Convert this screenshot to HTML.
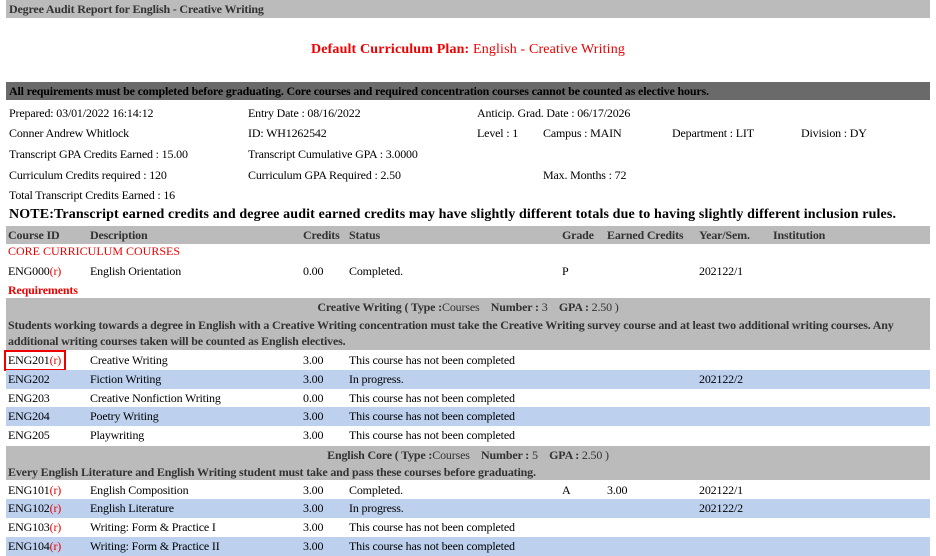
<!DOCTYPE html>
<html><head><meta charset="utf-8"><style>
body{margin:0;width:936px;height:548px;overflow:hidden;background:#fff;font-family:"Liberation Serif",serif;font-size:12px;letter-spacing:-0.17px;color:#000;position:relative}
div{position:absolute;white-space:nowrap}
.b{font-weight:bold}
.r{color:#e00}
.row{left:6px;width:924px;height:19px}
.row span{position:absolute;top:2px}
.blue{background:#bdd1ee}
.gray{background:#bbb}
.c1{left:2px}.c2{left:84px}.c3{left:297px}.c4{left:343px}.c5{left:556px}.c6{left:601px}.c7{left:693px}.c8{left:767px}
</style></head><body>
<div class="gray b" style="left:6px;top:0;width:924px;height:18px;color:#333"><span style="position:absolute;left:3px;top:2px">Degree Audit Report for English - Creative Writing</span></div>
<div style="left:0;width:936px;top:42px;text-align:center;font-size:14px;letter-spacing:0.15px;color:#e00"><b>Default Curriculum Plan:</b> English - Creative Writing</div>
<div class="b" style="left:6px;top:82px;width:924px;height:18px;background:#6a6a6a;color:#000"><span style="position:absolute;left:3px;top:2px">All requirements must be completed before graduating. Core courses and required concentration courses cannot be counted as elective hours.</span></div>
<div style="left:9px;top:106px">Prepared: 03/01/2022 16:14:12</div>
<div style="left:248px;top:106px">Entry Date : 08/16/2022</div>
<div style="left:477px;top:106px">Anticip. Grad. Date : 06/17/2026</div>
<div style="left:9px;top:126px">Conner Andrew Whitlock</div>
<div style="left:248px;top:126px">ID: WH1262542</div>
<div style="left:477px;top:126px">Level : 1</div>
<div style="left:543px;top:126px">Campus : MAIN</div>
<div style="left:672px;top:126px">Department : LIT</div>
<div style="left:801px;top:126px">Division : DY</div>
<div style="left:9px;top:147px">Transcript GPA Credits Earned : 15.00</div>
<div style="left:248px;top:147px">Transcript Cumulative GPA : 3.0000</div>
<div style="left:9px;top:168px">Curriculum Credits required : 120</div>
<div style="left:248px;top:168px">Curriculum GPA Required : 2.50</div>
<div style="left:543px;top:168px">Max. Months : 72</div>
<div style="left:9px;top:188px">Total Transcript Credits Earned : 16</div>
<div class="b" style="left:9px;top:207px;font-size:14px;letter-spacing:0.13px">NOTE:Transcript earned credits and degree audit earned credits may have slightly different totals due to having slightly different inclusion rules.</div>
<div class="row gray b" style="top:226px;height:18px;color:#333"><span class="c1">Course ID</span><span class="c2">Description</span><span class="c3">Credits</span><span class="c4">Status</span><span class="c5">Grade</span><span class="c6">Earned Credits</span><span class="c7">Year/Sem.</span><span class="c8">Institution</span></div>
<div class="r" style="left:8px;top:244px;letter-spacing:0">CORE CURRICULUM COURSES</div>
<div class="row" style="top:262px"><span class="c1">ENG000<span class="r" style="position:static">(r)</span></span><span class="c2">English Orientation</span><span class="c3">0.00</span><span class="c4">Completed.</span><span class="c5">P</span><span class="c7">202122/1</span></div>
<div class="r b" style="left:8px;top:283px">Requirements</div>
<div class="gray b" style="left:6px;top:298px;width:924px;height:52px;color:#333">
<div style="left:0;width:924px;top:2px;text-align:center">Creative Writing ( Type :<span style="font-weight:normal">Courses</span> &nbsp;&nbsp;&nbsp;Number : <span style="font-weight:normal">3</span> &nbsp;&nbsp;&nbsp;GPA : <span style="font-weight:normal">2.50 )</span></div>
<div style="left:2px;top:20px">Students working towards a degree in English with a Creative Writing concentration must take the Creative Writing survey course and at least two additional writing courses. Any</div>
<div style="left:2px;top:36px">additional writing courses taken will be counted as English electives.</div>
</div>
<div class="row" style="top:351px"><span class="c1">ENG201<span class="r" style="position:static">(r)</span></span><span class="c2">Creative Writing</span><span class="c3">3.00</span><span class="c4">This course has not been completed</span></div>
<div style="left:4px;top:350px;width:58px;height:17px;border:2px solid #e00"></div>
<div class="row blue" style="top:370px"><span class="c1">ENG202</span><span class="c2">Fiction Writing</span><span class="c3">3.00</span><span class="c4">In progress.</span><span class="c7">202122/2</span></div>
<div class="row" style="top:389px"><span class="c1">ENG203</span><span class="c2">Creative Nonfiction Writing</span><span class="c3">0.00</span><span class="c4">This course has not been completed</span></div>
<div class="row blue" style="top:407px"><span class="c1">ENG204</span><span class="c2">Poetry Writing</span><span class="c3">3.00</span><span class="c4">This course has not been completed</span></div>
<div class="row" style="top:426px"><span class="c1">ENG205</span><span class="c2">Playwriting</span><span class="c3">3.00</span><span class="c4">This course has not been completed</span></div>
<div class="gray b" style="left:6px;top:446px;width:924px;height:34px;color:#333">
<div style="left:0;width:924px;top:2px;text-align:center">English Core ( Type :<span style="font-weight:normal">Courses</span> &nbsp;&nbsp;&nbsp;Number : <span style="font-weight:normal">5</span> &nbsp;&nbsp;&nbsp;GPA : <span style="font-weight:normal">2.50 )</span></div>
<div style="left:2px;top:19px">Every English Literature and English Writing student must take and pass these courses before graduating.</div>
</div>
<div class="row" style="top:481px"><span class="c1">ENG101<span class="r" style="position:static">(r)</span></span><span class="c2">English Composition</span><span class="c3">3.00</span><span class="c4">Completed.</span><span class="c5">A</span><span class="c6">3.00</span><span class="c7">202122/1</span></div>
<div class="row blue" style="top:499px"><span class="c1">ENG102<span class="r" style="position:static">(r)</span></span><span class="c2">English Literature</span><span class="c3">3.00</span><span class="c4">In progress.</span><span class="c7">202122/2</span></div>
<div class="row" style="top:518px"><span class="c1">ENG103<span class="r" style="position:static">(r)</span></span><span class="c2">Writing: Form &amp; Practice I</span><span class="c3">3.00</span><span class="c4">This course has not been completed</span></div>
<div class="row blue" style="top:537px"><span class="c1">ENG104<span class="r" style="position:static">(r)</span></span><span class="c2">Writing: Form &amp; Practice II</span><span class="c3">3.00</span><span class="c4">This course has not been completed</span></div>
</body></html>
